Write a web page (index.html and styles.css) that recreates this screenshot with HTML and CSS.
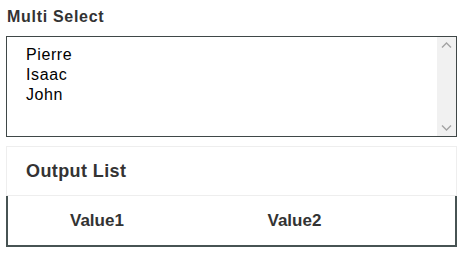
FILE: index.html
```html
<!DOCTYPE html>
<html lang="en">
<head>
    <meta charset="UTF-8">
    <title>Multi Select</title>
    <link rel="stylesheet" href="styles.css">
</head>
<body>
    <div class="page">
        <label class="field-label">Multi Select</label>
        <div class="listbox">
            <div class="options">
                <div class="option">Pierre</div>
                <div class="option">Isaac</div>
                <div class="option">John</div>
            </div>
            <div class="scrollbar">
                <svg class="arrow" width="19" height="17" viewBox="0 0 19 17"><path d="M5 10.5 L9.5 6 L14 10.5" fill="none" stroke="#a3a3a3" stroke-width="1.4"/></svg>
                <svg class="arrow" width="19" height="17" viewBox="0 0 19 17"><path d="M5 6.5 L9.5 11 L14 6.5" fill="none" stroke="#a3a3a3" stroke-width="1.4"/></svg>
            </div>
        </div>

        <div class="output">
            <div class="output-header">Output List</div>
            <table class="output-table">
                <tr>
                    <th>Value1</th>
                    <th>Value2</th>
                </tr>
            </table>
        </div>
    </div>
</body>
</html>
```

FILE: styles.css
```css
body {
    margin: 0;
    font-family: "Liberation Sans", Arial, sans-serif;
    color: #333;
    background: #fff;
}
.page {
    padding: 8px 9px 0 6px;
}
.field-label {
    display: block;
    font-size: 16px;
    line-height: 18px;
    font-weight: bold;
    letter-spacing: 0.7px;
    color: #333;
    padding-left: 1px;
    margin-bottom: 10px;
}
.listbox {
    display: flex;
    height: 99px;
    border: 1px solid #3f4747;
}
.options {
    flex: 1;
    padding: 8px 0 0 19px;
    color: #000;
    font-size: 16px;
    letter-spacing: 0.6px;
}
.option {
    line-height: 20px;
}
.scrollbar {
    width: 19px;
    background: #f1f1f1;
    display: flex;
    flex-direction: column;
    justify-content: space-between;
}
.arrow {
    display: block;
}
.output {
    margin-top: 9px;
    border: 1px solid #eee;
    border-bottom: none;
}
.output-header {
    height: 48px;
    line-height: 48px;
    padding-left: 19px;
    font-size: 18px;
    font-weight: bold;
    letter-spacing: 0.4px;
    color: #333;
    border-bottom: 1px solid #eee;
}
.output-table {
    border-collapse: collapse;
    margin-left: -1px;
    width: calc(100% + 2px);
    border-left: 2px solid #475353;
    border-right: 2px solid #475353;
    border-bottom: 2px solid #475353;
}
.output-table th {
    height: 47px;
    width: 50%;
    text-align: left;
    font-size: 17px;
    color: #333;
}
.output-table th:first-child {
    padding-left: 62px;
}
.output-table th:last-child {
    padding-left: 36px;
}
```
